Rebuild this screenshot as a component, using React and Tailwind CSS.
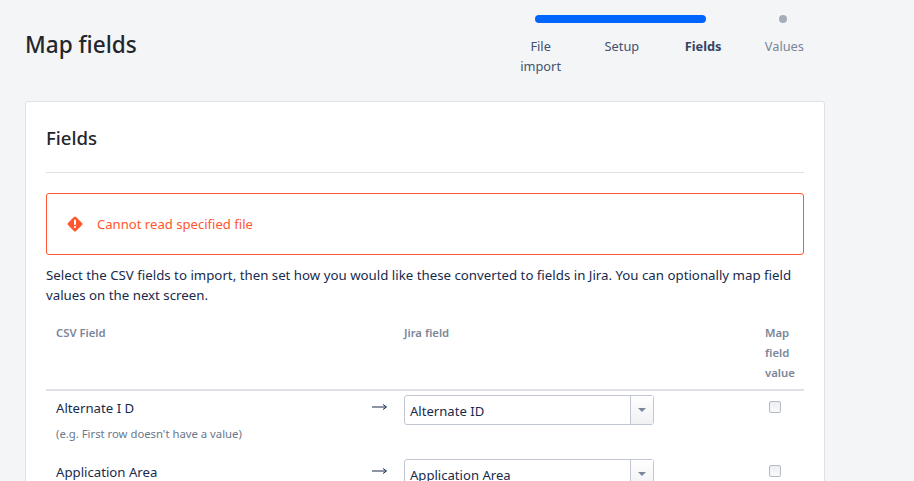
import React from 'react';

const steps = [
  { label: 'File import', cls: 'text-[#42526e]' },
  { label: 'Setup', cls: 'text-[#42526e]' },
  { label: 'Fields', cls: 'text-[#344563] font-bold text-[12.3px]' },
  { label: 'Values', cls: 'text-[#7a869a]' },
];

const rows = [
  { csv: 'Alternate I D', hint: "(e.g.  First row doesn't have a value)", jira: 'Alternate ID' },
  { csv: 'Application Area', hint: '', jira: 'Application Area' },
];

const Arrow = () => (
  <svg width="15" height="8" viewBox="0 0 15 8" className="block">
    <path d="M0 4h14M11 1.5 14.5 4 11 6.5" fill="none" stroke="#172b4d" strokeWidth="1" />
  </svg>
);

const Select = ({ value }) => (
  <div className="flex h-[30px] w-[250px] rounded-[3px] border border-[#c1c7d0] bg-white">
    <div className="flex-1 pl-[5px] pt-[1px] text-[13.1px] leading-[29px] text-[#172b4d]">{value}</div>
    <div className="flex w-[23px] items-center justify-center border-l border-[#c1c7d0] bg-gradient-to-b from-white to-[#f0f1f3]">
      <svg width="8" height="4" viewBox="0 0 8 4"><path d="M0 0h8L4 4z" fill="#7a869a" /></svg>
    </div>
  </div>
);

const App = () => {
  return (
    <div className="h-[481px] overflow-hidden bg-[#f4f5f7] font-['Noto_Sans',sans-serif] text-[14px] text-[#172b4d]">
      <div className="w-[825px] pl-[25px]">
        <div className="flex h-[101px] justify-between">
          <h1 className="pt-[28px] text-[22.6px] font-medium leading-[34px] text-[#23262b]">Map fields</h1>
          <div className="w-[325px] pt-[15px]">
            <div className="flex h-2 items-center">
              <div className="ml-[35px] h-2 w-[171px] rounded bg-[#0065ff]"></div>
              <div className="ml-[73px] h-2 w-2 rounded-full bg-[#a5adba]"></div>
            </div>
            <div className="mt-[13px] grid grid-cols-4">
              {steps.map((step) => (
                <div key={step.label} className={`px-4 text-center text-[12.8px] leading-5 ${step.cls}`}>
                  {step.label}
                </div>
              ))}
            </div>
          </div>
        </div>

        <div className="rounded-[3px] border border-[#dfe1e6] bg-white px-5 pb-5">
          <h2 className="pb-[18px] pt-5 text-[18.6px] font-medium leading-[32px] text-[#23262b] border-b border-[#dfe1e6]">Fields</h2>

          <div className="mt-5 flex h-[62px] items-center rounded-[3px] border border-[#ff5630] pl-5">
            <svg width="16" height="16" viewBox="0 0 16 16" className="shrink-0">
              <path d="M8 .5a1.6 1.6 0 0 1 1.1.5l5.9 5.9a1.6 1.6 0 0 1 0 2.2L9.100 15a1.6 1.6 0 0 1-2.200 0L1 9.100a1.600 1.600 0 0 1 0-2.200L6.900 1A1.600 1.600 0 0 1 8 .5z" fill="#ff5630" />
              <rect x="7" y="3.500" width="2" height="5.500" rx="1" fill="#fff" />
              <circle cx="8" cy="11" r="1.100" fill="#fff" />
            </svg>
            <span className="ml-[14px] pt-[1px] text-[13.1px] text-[#ff5630]">Cannot read specified file</span>
          </div>

          <p className="mt-[10px] text-[13.27px] leading-5 text-[#172b4d]">
            Select the CSV fields to import, then set how you would like these converted to fields in Jira. You can optionally map field values on the next screen.
          </p>

          <div className="mt-[18px] grid grid-cols-[316px_42px_351px_49px] border-b-2 border-[#dfe1e6] pb-[6px] text-[11.3px] font-semibold leading-5 text-[#7a869a]">
            <div className="pl-[10px]">CSV Field</div>
            <div></div>
            <div>Jira field</div>
            <div className="pl-[10px]">Map field value</div>
          </div>

          {rows.map((row) => (
            <div key={row.csv} className="grid h-[64px] grid-cols-[316px_42px_351px_49px] pt-[4px]">
              <div className="pl-[10px]">
                <div className="pt-[3px] text-[13.2px] leading-5">{row.csv}</div>
                {row.hint && <div className="mt-[6px] text-[11.3px] leading-5 text-[#6b778c]">{row.hint}</div>}
              </div>
              <div className="pl-[10px] pt-[8px]"><Arrow /></div>
              <div><Select value={row.jira} /></div>
              <div className="pl-[14px] pt-[6px]">
                <div className="h-3 w-3 rounded-[2px] border border-[#b3b9c4] bg-gradient-to-b from-[#eceef1] to-[#f8f9fa]"></div>
              </div>
            </div>
          ))}
        </div>
      </div>
    </div>
  );
};

export default App;
